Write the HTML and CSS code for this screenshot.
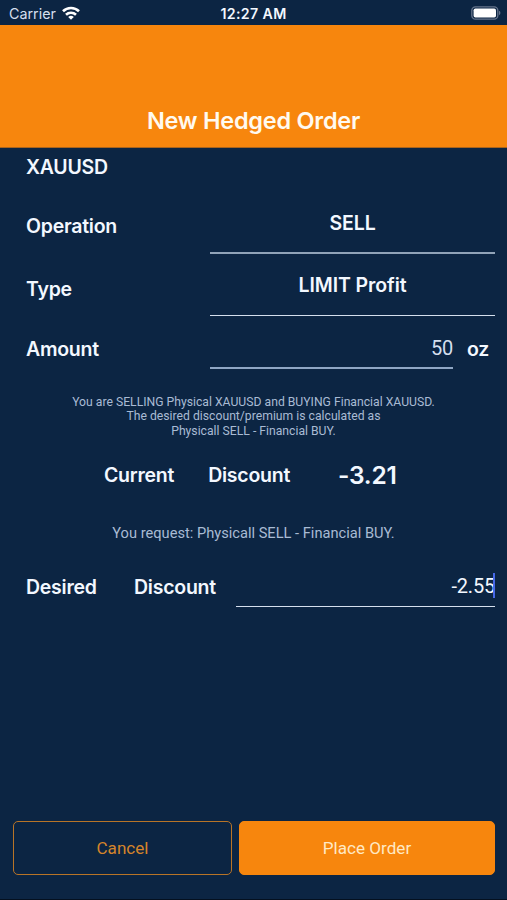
FILE: index.html
```html
<!DOCTYPE html>
<html lang="en">

<head>
	<meta charset="UTF-8" />
	<meta name="viewport" content="width=device-width, initial-scale=1.0" />
	<title>New Hedged Order</title>
	<link rel="stylesheet" href="styles.css">
</head>

<body>
	<div class="screen">
		<div class="status-bar">
			<div class="carrier">
				<span>Carrier</span>
				<svg class="wifi" viewBox="0 0 18 14" fill="none" stroke="#fff" stroke-width="2.6">
					<path d="M1 5.3a11.4 11.4 0 0 1 16 0" />
					<path d="M4 8.7a7.2 7.2 0 0 1 10 0" />
					<path d="M9 13.8L6.2 11a4 4 0 0 1 5.6 0z" fill="#fff" stroke="none" />
				</svg>
			</div>
			<div class="clock">12:27 AM</div>
			<div class="battery">
				<svg viewBox="0 0 30 14">
					<rect x="0.8" y="0.8" width="26" height="12.4" rx="3.6" fill="none" stroke="#65748c" stroke-width="1.3" />
					<rect x="2.6" y="2.4" width="22.4" height="9.2" rx="1.8" fill="#fff" />
					<path d="M28 4.8a2.4 2.4 0 0 1 0 4.4z" fill="#65748c" />
				</svg>
			</div>
		</div>

		<header class="header">
			<h1>New Hedged Order</h1>
		</header>

		<main class="form">
			<div class="symbol">XAUUSD</div>

			<div class="row row-operation">
				<span class="label">Operation</span>
				<div class="field select">SELL</div>
			</div>
			<div class="row row-type">
				<span class="label">Type</span>
				<div class="field select">LIMIT Profit</div>
			</div>
			<div class="row row-amount">
				<span class="label">Amount</span>
				<div class="field number">50</div>
				<span class="unit">oz</span>
			</div>

			<p class="hint">
				You are SELLING Physical XAUUSD and BUYING Financial XAUUSD.<br>
				The desired discount/premium is calculated as<br>
				Physicall SELL - Financial BUY.
			</p>

			<div class="current">
				<span>Current</span>
				<span class="kind">Discount</span>
				<span class="price">-3.21</span>
			</div>

			<p class="request">You request: Physicall SELL - Financial BUY.</p>

			<div class="row row-desired">
				<span class="label">Desired</span>
				<span class="kind">Discount</span>
				<div class="field number">-2.55<i class="caret"></i></div>
			</div>
		</main>

		<footer class="actions">
			<button class="btn cancel">Cancel</button>
			<button class="btn place">Place Order</button>
		</footer>
	</div>
</body>

</html>
```
FILE: styles.css
```css
* {
	box-sizing: border-box;
}

body {
	margin: 0;
	background: #0c2543;
	color: #f3f8ff;
	font-family: Inter, sans-serif;
}

.screen {
	height: 900px;
	display: flex;
	flex-direction: column;
	border-bottom: 1px solid #04101f;
}

.status-bar {
	height: 25px;
	padding: 2px 6px 0 9px;
	display: grid;
	grid-template-columns: 1fr auto 1fr;
	align-items: center;
	font-size: 14px;
}

.carrier {
	display: flex;
	align-items: center;
	gap: 6px;
	font-size: 14.3px;
	color: #d5dfee;
}

.wifi {
	width: 18px;
	height: 14px;
	margin-top: -2px;
}

.clock {
	margin-right: 3px;
	font-size: 14.2px;
	font-weight: 600;
	letter-spacing: 0.35px;
}

.battery {
	display: flex;
	justify-content: flex-end;
	margin-top: -2px;
}

.battery svg {
	width: 30px;
	height: 14px;
}

.header {
	height: 123px;
	padding-bottom: 11px;
	display: flex;
	align-items: flex-end;
	justify-content: center;
	background: #f7860d;
	border-bottom: 1px solid #a9641e;
}

h1 {
	margin: 0;
	font-size: 23.5px;
	line-height: 30px;
	font-weight: 600;
	letter-spacing: -0.25px;
	color: #fffaf0;
}

.form {
	flex: 1;
	padding: 0 12px 0 26px;
	font-size: 19.5px;
	font-weight: 600;
	letter-spacing: -0.25px;
}

.symbol {
	height: 44px;
	line-height: 38px;
}

.row {
	display: flex;
	align-items: center;
}

.label {
	width: 184px;
}

.field {
	flex: 1;
	align-self: stretch;
	display: flex;
	align-items: center;
	border-bottom: 1px solid #d5dfee;
}

.select {
	justify-content: center;
	letter-spacing: -0.1px;
}

.number {
	justify-content: flex-end;
	font-family: Roboto, sans-serif;
	font-size: 20px;
	font-weight: 400;
	letter-spacing: -0.2px;
}

.row-operation {
	height: 62px;
}

.row-operation .label {
	padding-top: 6px;
}

.row-operation .field {
	padding-top: 1px;
	border-bottom: 2px solid #91a3b8;
}

.row-type {
	height: 62px;
}

.row-type .label {
	padding-top: 8px;
}

.row-amount {
	height: 53px;
}

.row-amount .label,
.unit {
	padding-top: 13px;
}

.row-amount .field {
	padding-top: 12px;
	border-bottom: 2px solid #8fa6c4;
	color: #d5dfee;
}

.unit {
	width: 42px;
	padding-left: 14px;
}

.hint,
.request {
	margin: 0;
	text-align: center;
	font-family: Roboto, sans-serif;
	font-weight: 400;
	letter-spacing: 0;
	color: #a9bbd4;
}

.hint {
	padding: 26px 14px 0 0;
	font-size: 12.2px;
	line-height: 14.3px;
}

.current {
	margin-top: 15px;
	padding-left: 78px;
	height: 44px;
	display: flex;
	align-items: center;
}

.current .kind {
	margin-left: 34px;
}

.price {
	margin-left: 48px;
	font-size: 24.5px;
}

.request {
	padding: 26px 14px 0 0;
	font-size: 14.65px;
	line-height: 20px;
}

.row-desired {
	height: 40px;
	margin-top: 24px;
}

.row-desired .label {
	width: 108px;
}

.row-desired .kind {
	width: 102px;
}

.row-desired .field {
	position: relative;
}

.caret {
	position: absolute;
	right: 0;
	top: 6px;
	width: 2px;
	height: 25px;
	background: #4668e8;
}

.actions {
	height: 78px;
	padding: 0 12px 24px 13px;
	display: flex;
	gap: 7px;
}

.btn {
	padding: 0;
	border: 1px solid #f7860d;
	border-radius: 5px;
	font-family: Roboto, sans-serif;
	font-size: 17.1px;
}

.cancel {
	width: 219px;
	background: transparent;
	border: 1.5px solid #b87427;
	color: #d5842a;
}

.place {
	flex: 1;
	background: #f7860d;
	color: #ffe9c4;
}
```
